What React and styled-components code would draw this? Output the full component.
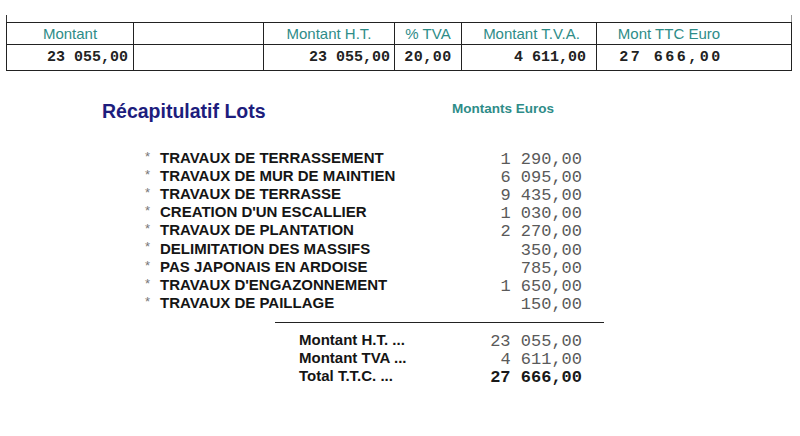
import React from 'react';
import styled, { createGlobalStyle } from 'styled-components';

const GlobalStyle = createGlobalStyle`
  html, body {
    margin: 0;
    padding: 0;
    background: #fff;
  }
  body {
    width: 800px;
    height: 436px;
    overflow: hidden;
    font-family: "Liberation Sans", Arial, sans-serif;
  }
`;

const Page = styled.div`
  width: 800px;
  height: 436px;
`;

const TableFrame = styled.div`
  margin: 15px 0 0 6px;
  width: 784px;
  padding-top: 7px;
  border-left: 1px solid #333;
  border-right: 1px solid #999;
`;

const Table = styled.table`
  width: 786px;
  margin-left: -1px;
  border-collapse: collapse;
  table-layout: fixed;
`;

const Head = styled.th`
  height: 21px;
  padding: 0 ${p => p.$pr || 0}px 0 ${p => p.$pl || 0}px;
  border: 1px solid #222;
  font-family: "Liberation Sans", Arial, sans-serif;
  font-size: 15px;
  font-weight: normal;
  color: #2e8c88;
  text-align: center;
  vertical-align: middle;
  line-height: 21px;
`;

const Cell = styled.td`
  height: 25px;
  padding: 0 ${p => p.$pr || 0}px 0 0;
  border: 1px solid #222;
  font-family: "Liberation Mono", "Courier New", monospace;
  font-size: 15px;
  font-weight: bold;
  color: #222;
  letter-spacing: ${p => p.$spacing || 0}px;
  text-align: ${p => p.$align || 'right'};
  vertical-align: middle;
  white-space: pre;
`;

const Recap = styled.section`
  margin-top: 26px;
`;

const TitleRow = styled.div`
  display: flex;
  align-items: baseline;
  padding-left: 102px;
  height: 24px;
`;

const Title = styled.h2`
  margin: 0;
  width: 350px;
  font-size: 19.5px;
  font-weight: bold;
  color: #1d1d7d;
  line-height: 24px;
  position: relative;
  top: 2px;
`;

const Subtitle = styled.div`
  font-size: 13.5px;
  font-weight: bold;
  color: #2e8c88;
  position: relative;
  top: -3px;
`;

const Lots = styled.div`
  margin: 28px 0 0 145px;
  width: 437px;
  display: grid;
  grid-template-columns: 15px 1fr auto;
  grid-auto-rows: 18.1px;
  align-items: center;
`;

const Star = styled.span`
  font-size: 13px;
  color: #777;
  align-self: start;
  line-height: 14px;
  margin-top: 1px;
`;

const Label = styled.span`
  font-size: 15px;
  font-weight: bold;
  color: #151515;
  line-height: 18px;
  white-space: nowrap;
`;

const Amount = styled.span`
  font-family: "Liberation Mono", "Courier New", monospace;
  font-size: 17px;
  font-weight: ${p => (p.$bold ? 'bold' : 'normal')};
  color: ${p => (p.$bold ? '#1a1a1a' : '#5a5a5a')};
  text-align: right;
  white-space: pre;
  line-height: 16px;
  height: 16px;
  position: relative;
  top: 2px;
`;

const Rule = styled.hr`
  margin: 10px 0 0 275px;
  width: 329px;
  border: none;
  border-top: 1px solid #222;
  height: 0;
`;

const Totals = styled.div`
  margin: 8px 0 0 299px;
  width: 283px;
  display: grid;
  grid-template-columns: 1fr auto;
  grid-auto-rows: 18.1px;
  align-items: center;
`;

const head = [
  { text: 'Montant' },
  { text: '' },
  { text: 'Montant H.T.' },
  { text: '% TVA' },
  { text: 'Montant T.V.A.', pl: 5 },
  { text: 'Mont TTC Euro', pr: 50 },
];

const values = [
  { text: '23 055,00', pr: 5 },
  { text: '' },
  { text: '23 055,00', pr: 4 },
  { text: '20,00', align: 'center', spacing: 0.5 },
  { text: '4 611,00', pr: 10 },
  { text: '27 666,00', align: 'center', pr: 46, spacing: 2.5 },
];

const widths = [127, 130, 131, 67, 135, 195];

const lots = [
  ['TRAVAUX DE TERRASSEMENT', '1 290,00'],
  ['TRAVAUX DE MUR DE MAINTIEN', '6 095,00'],
  ['TRAVAUX DE TERRASSE', '9 435,00'],
  ["CREATION D'UN ESCALLIER", '1 030,00'],
  ['TRAVAUX DE PLANTATION', '2 270,00'],
  ['DELIMITATION DES MASSIFS', '350,00'],
  ['PAS JAPONAIS EN ARDOISE', '785,00'],
  ["TRAVAUX D'ENGAZONNEMENT", '1 650,00'],
  ['TRAVAUX DE PAILLAGE', '150,00'],
];

const totals = [
  ['Montant H.T. ...', '23 055,00'],
  ['Montant TVA ...', '4 611,00'],
  ['Total T.T.C. ...', '27 666,00', true],
];

export default function App() {
  return (
    <Page>
      <GlobalStyle />
      <TableFrame>
        <Table>
          <colgroup>
            {widths.map((w, i) => (
              <col key={i} style={{ width: w }} />
            ))}
          </colgroup>
          <thead>
            <tr>
              {head.map((h, i) => (
                <Head key={i} $pl={h.pl} $pr={h.pr}>
                  {h.text}
                </Head>
              ))}
            </tr>
          </thead>
          <tbody>
            <tr>
              {values.map((v, i) => (
                <Cell key={i} $align={v.align} $pr={v.pr} $spacing={v.spacing}>
                  {v.text}
                </Cell>
              ))}
            </tr>
          </tbody>
        </Table>
      </TableFrame>

      <Recap>
        <TitleRow>
          <Title>Récapitulatif Lots</Title>
          <Subtitle>Montants Euros</Subtitle>
        </TitleRow>

        <Lots>
          {lots.map(([label, amount]) => (
            <React.Fragment key={label}>
              <Star>*</Star>
              <Label>{label}</Label>
              <Amount>{amount}</Amount>
            </React.Fragment>
          ))}
        </Lots>

        <Rule />

        <Totals>
          {totals.map(([label, amount, bold]) => (
            <React.Fragment key={label}>
              <Label>{label}</Label>
              <Amount $bold={bold}>{amount}</Amount>
            </React.Fragment>
          ))}
        </Totals>
      </Recap>
    </Page>
  );
}
